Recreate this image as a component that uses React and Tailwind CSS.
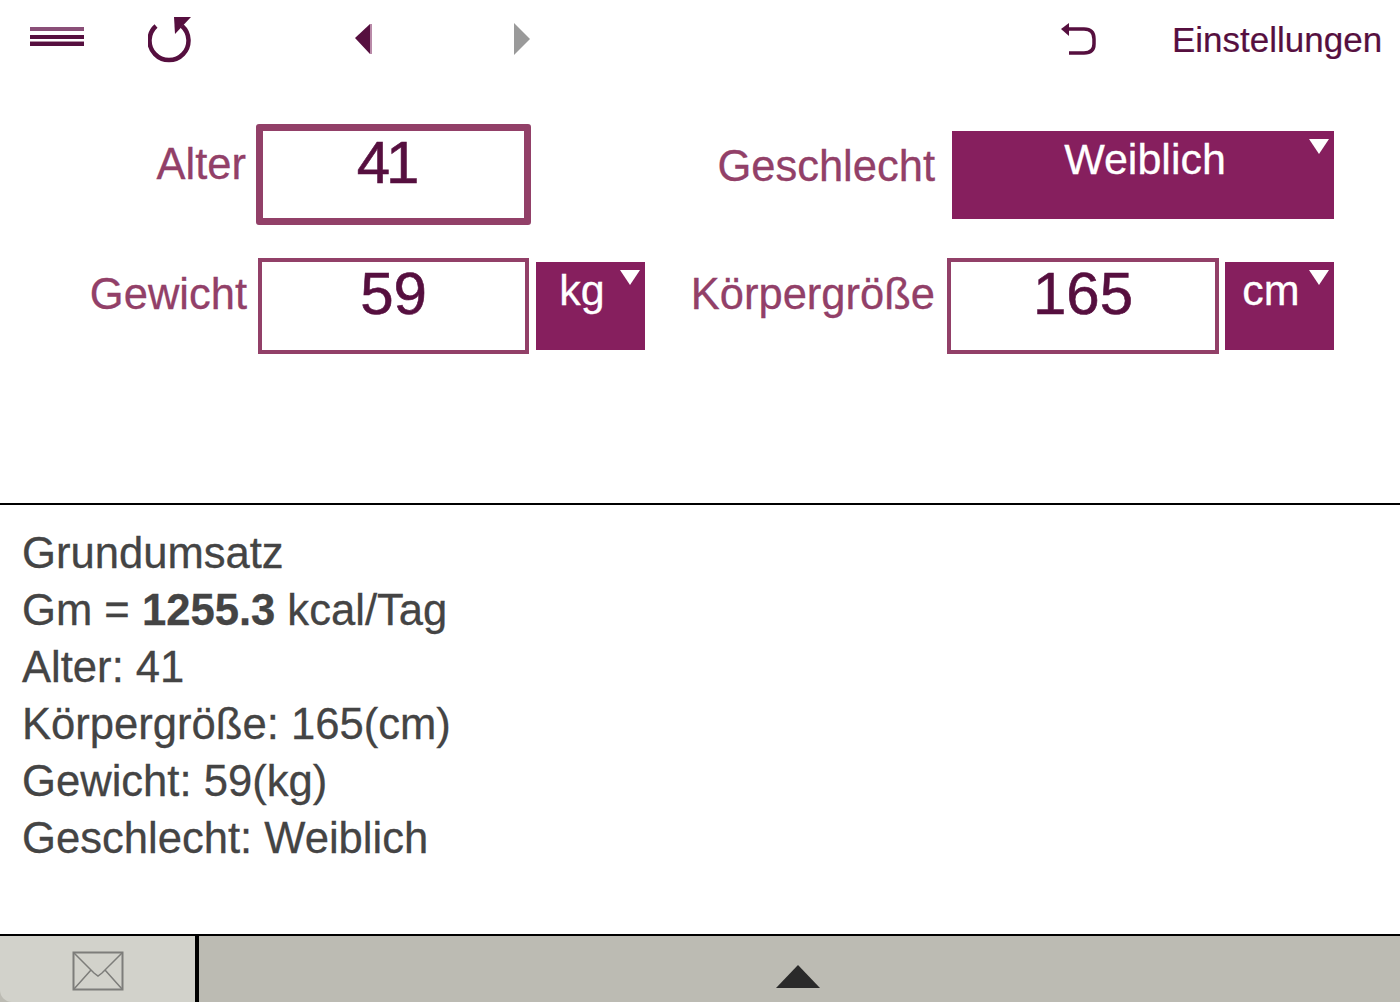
const Caret = () => (
  <svg width="20" height="16" viewBox="0 0 20 16" className="absolute right-[5px] top-[8px]">
    <polygon points="0,0 20,0 10,15" fill="#ffffff" />
  </svg>
);

const Select = ({ children, className }) => (
  <div className={`relative bg-[#861f5e] text-white text-[43px] leading-[50px] text-center shrink-0 [-webkit-text-stroke:0.3px] ${className}`}>
    {children}
    <Caret />
  </div>
);

const Label = ({ children, className }) => (
  <div className={`text-[#924068] text-[43.5px] leading-[50px] text-right shrink-0 [-webkit-text-stroke:0.3px] ${className}`}>{children}</div>
);

const Box = ({ value, className }) => (
  <div className={`border-[#924068] bg-white text-[#560f3f] text-[60px] leading-[64px] text-center shrink-0 [-webkit-text-stroke:0.6px] ${className}`}>
    {value}
  </div>
);

const App = () => {
  const lines = ["Alter: 41", "Körpergröße: 165(cm)", "Gewicht: 59(kg)", "Geschlecht: Weiblich"];

  return (
    <div className="w-[1400px] h-[1002px] flex flex-col bg-white overflow-hidden font-['Liberation_Sans',Arial,sans-serif]">
      {/* top bar */}
      <div className="h-[78px] flex items-start shrink-0">
        <svg width="54" height="19" viewBox="0 0 54 19" className="ml-[30px] mt-[27px]">
          <rect x="0" y="0" width="54" height="4" fill="#8a4f78" />
          <rect x="0" y="8" width="54" height="4" fill="#560f3f" />
          <rect x="0" y="14" width="54" height="1" fill="#b48fa6" />
          <rect x="0" y="15" width="54" height="4" fill="#560f3f" />
        </svg>
        <svg width="46" height="46" viewBox="0 0 46 46" className="ml-[64px] mt-[17px]">
          <path d="M8 9 A19.5 19.5 0 1 0 34 9" fill="none" stroke="#560f3f" strokeWidth="4.5" />
          <polygon points="26,0 43,0 27,17" fill="#560f3f" />
        </svg>
        <svg width="17" height="30" viewBox="0 0 17 30" className="ml-[161px] mt-[24px]">
          <polygon points="15,0 15,30 0,14" fill="#560f3f" />
          <rect x="15" y="0" width="2" height="30" fill="#b98aa8" />
        </svg>
        <svg width="18" height="32" viewBox="0 0 18 32" className="ml-[141px] mt-[23px]">
          <polygon points="1,0 1,32 17,16" fill="#9a9a9a" />
        </svg>
        <svg width="38" height="38" viewBox="0 0 38 38" className="ml-[529px] mt-[20px]">
          <path d="M8 9 H24 Q34 9 34 19 V24 Q34 33 24 33 H9" fill="none" stroke="#560f3f" strokeWidth="3.5" />
          <polygon points="9,3 9,16 1,9" fill="#560f3f" />
        </svg>
        <div className="ml-[74px] mt-[20px] text-[#560f3f] text-[35px] leading-[40px] whitespace-nowrap [-webkit-text-stroke:0.2px]">Einstellungen</div>
      </div>

      {/* form */}
      <div className="h-[425px] shrink-0 pt-[46px] flex flex-col gap-[33px]">
        <div className="flex items-start">
          <Label className="w-[246px] mt-[15px]">Alter</Label>
          <Box value="41" className="ml-[10px] w-[275px] h-[101px] border-[7px] rounded-[3px] tracking-[-4px] pr-[15px]" />
          <Label className="w-[404px] mt-[17px]">Geschlecht</Label>
          <Select className="ml-[17px] mt-[7px] w-[382px] h-[88px] pt-[3px] pl-[4px]">Weiblich</Select>
        </div>
        <div className="flex items-start">
          <Label className="w-[247px] mt-[11px]">Gewicht</Label>
          <Box value="59" className="ml-[11px] w-[271px] h-[96px] border-[4px]" />
          <Select className="ml-[7px] mt-[4px] w-[109px] h-[88px] pt-[3px] pr-[17px]">kg</Select>
          <Label className="w-[290px] mt-[11px]">Körpergröße</Label>
          <Box value="165" className="ml-[12px] w-[272px] h-[96px] border-[4px]" />
          <Select className="ml-[6px] mt-[4px] w-[109px] h-[88px] pt-[3px] pr-[17px]">cm</Select>
        </div>
      </div>

      {/* results */}
      <div className="flex-1 border-t-2 border-black pt-[20px] pl-[22px] text-[#444444] text-[43.6px] leading-[57px] [-webkit-text-stroke:0.3px]">
        <div>Grundumsatz</div>
        <div>
          Gm = <b className="font-bold">1255.3</b> kcal/Tag
        </div>
        {lines.map((line) => (
          <div key={line}>{line}</div>
        ))}
      </div>

      {/* footer */}
      <div className="h-[68px] shrink-0 border-t-2 border-black flex bg-[#bcbbb3]">
        <div className="w-[195px] bg-[#d2d2cb] rounded-bl-[12px] flex justify-center items-start pt-[15px]">
          <svg width="52" height="40" viewBox="0 0 52 40">
            <rect x="1.5" y="1.5" width="49" height="37" fill="none" stroke="#7d7d7a" strokeWidth="2" />
            <path d="M2 2 L22 22 L26 25 L30 22 L50 2 M2 38 L19 19 M50 38 L33 19" fill="none" stroke="#7d7d7a" strokeWidth="1.5" />
          </svg>
        </div>
        <div className="w-[4px] bg-black" />
        <div className="flex-1 flex justify-center items-start pt-[29px] pr-[3px]">
          <svg width="44" height="23" viewBox="0 0 44 23">
            <polygon points="22,0 44,23 0,23" fill="#2a2a2a" />
          </svg>
        </div>
      </div>
    </div>
  );
};

export default App;
